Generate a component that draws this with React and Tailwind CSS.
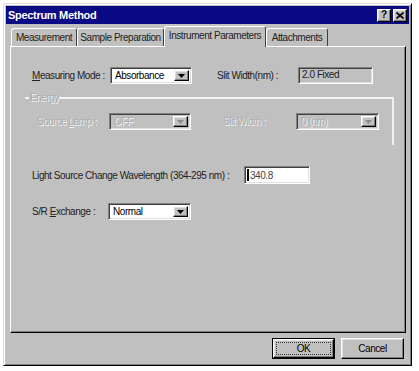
const raised =
  "border border-t-white border-l-white border-r-black border-b-black shadow-[inset_-1px_-1px_0_#808080,inset_1px_1px_0_#dfdfdf]";
const sunken =
  "border border-t-[#808080] border-l-[#808080] border-r-white border-b-white shadow-[inset_1px_1px_0_#404040,inset_-1px_-1px_0_#dfdfdf]";
const dim = "text-[#acacac] [text-shadow:1px_1px_0_#f4f4f4]";

function Arrow({ disabled }) {
  return (
    <div className={`flex h-full w-[15px] items-center justify-center bg-[#c0c0c0] ${raised}`}>
      <svg width="7" height="4" viewBox="0 0 7 4">
        <path d="M0 0h7L3.5 4z" fill={disabled ? "#8a8a8a" : "#000"} />
      </svg>
    </div>
  );
}

function Combo({ value, width, disabled }) {
  return (
    <div
      className={`flex h-[17px] shrink-0 items-stretch p-[2px] ${sunken} ${disabled ? "bg-[#c0c0c0]" : "bg-white"}`}
      style={{ width }}
    >
      <div className={`flex-1 pl-[2px] leading-[12px] ${disabled ? dim : "text-black"}`}>{value}</div>
      <Arrow disabled={disabled} />
    </div>
  );
}

function Tab({ label, w, active }) {
  return (
    <div
      className={`flex shrink-0 items-center justify-center rounded-t-[3px] border-t border-l border-r border-t-white border-l-white border-r-[#404040] bg-[#c0c0c0] ${
        active ? "relative z-10 -mb-px h-[21px] pb-[3px]" : "h-[18px]"
      }`}
      style={{ width: w }}
    >
      <span className="whitespace-nowrap text-[#222]">{label}</span>
    </div>
  );
}

export default function App() {
  return (
    <div className="h-[371px] w-[419px] whitespace-nowrap bg-white pl-[3px] pt-[3px] font-['Liberation_Sans',Arial,sans-serif] text-[10px] tracking-[-0.45px] text-[#222]">
      <div className="flex h-[363px] w-[409px] flex-col border border-t-[#dfdfdf] border-l-[#dfdfdf] border-r-black border-b-black bg-[#c0c0c0] shadow-[inset_1px_1px_0_#fff,inset_-1px_-1px_0_#808080] p-[1px]">
        {/* title bar */}
        <div className="mx-[1px] mt-[1px] flex h-[18px] items-center justify-between bg-[#0a0a84] pl-[2px] pr-[2px]">
          <span className="text-[11px] font-bold tracking-[-0.3px] text-white">Spectrum Method</span>
          <div className="flex gap-[2px]">
            <div className={`flex h-[13px] w-[14px] items-center justify-center bg-[#c0c0c0] text-[10px] font-bold leading-none tracking-normal text-black ${raised}`}>
              ?
            </div>
            <div className={`flex h-[13px] w-[14px] items-center justify-center bg-[#c0c0c0] ${raised}`}>
              <svg width="8" height="7" viewBox="0 0 8 7">
                <path d="M0.5 0.5l7 6M7.5 0.5l-7 6" stroke="#000" strokeWidth="1.6" />
              </svg>
            </div>
          </div>
        </div>

        <div className="flex flex-1 flex-col pl-[5px] pr-[3px]">
          {/* tabs */}
          <div className="mt-[2px] flex h-[20px] items-end pl-[1px]">
            <Tab label="Measurement" w={66} />
            <Tab label="Sample Preparation" w={87} />
            <Tab label="Instrument Parameters" w={102} active />
            <Tab label="Attachments" w={62} />
          </div>

          {/* panel */}
          <div className="h-[287px] w-[396px] border border-t-white border-l-white border-r-black border-b-black shadow-[inset_-1px_-1px_0_#808080] pt-[20px]">
            <div className="flex h-[17px] items-center pl-[21px]">
              <div className="w-[78px] shrink-0">
                <span className="underline">M</span>easuring Mode :
              </div>
              <Combo value="Absorbance" width={82} />
              <div className="ml-[25px] w-[81px] shrink-0">Slit Width(nm) :</div>
              <div className={`h-[17px] w-[75px] shrink-0 bg-[#c0c0c0] pl-[3px] leading-[14px] ${sunken}`}>2.0 Fixed</div>
            </div>

            <fieldset className="ml-[14px] mt-[8px] w-[369px] border-t-2 border-r-2 border-t-[#f2f2f2] border-r-[#f2f2f2] pb-[15px]">
              <legend className={`ml-[4px] px-[1px] leading-[12px] ${dim}`}>Energy</legend>
              <div className="mt-[9px] flex h-[17px] items-center pl-[12px]">
                <div className={`w-[72px] shrink-0 ${dim}`}>
                  Source <span className="underline">L</span>amp :
                </div>
                <Combo value="OFF" width={82} disabled />
                <div className={`ml-[32px] w-[73px] shrink-0 ${dim}`}>Slit Width :</div>
                <Combo value="0 (nm)" width={83} disabled />
              </div>
            </fieldset>

            <div className="mt-[21px] flex h-[18px] items-center pl-[21px]">
              <div className="w-[212px] shrink-0">Light Source Change Wavelength (364-295 nm) :</div>
              <div className={`flex h-[18px] w-[66px] shrink-0 items-center bg-white pl-[2px] ${sunken}`}>
                <span className="mr-[1px] h-[12px] w-[2px] bg-black" />
                <span className="text-[#444]">340.8</span>
              </div>
            </div>

            <div className="mt-[19px] flex h-[17px] items-center pl-[21px]">
              <div className="w-[76px] shrink-0">
                S/R <span className="underline">E</span>xchange :
              </div>
              <Combo value="Normal" width={83} />
            </div>
          </div>

          {/* buttons */}
          <div className="mt-[5px] flex w-[396px] justify-end gap-[6px] pr-[2px]">
            <div className="h-[21px] w-[63px] border border-black">
              <div className={`flex h-full w-full items-center justify-center bg-[#c0c0c0] p-[2px] ${raised}`}>
                <div className="flex h-full w-full items-center justify-center border border-dotted border-[#333] text-black">
                  OK
                </div>
              </div>
            </div>
            <div className={`flex h-[21px] w-[63px] items-center justify-center bg-[#c0c0c0] text-black ${raised}`}>
              Cancel
            </div>
          </div>
        </div>
      </div>
    </div>
  );
}
